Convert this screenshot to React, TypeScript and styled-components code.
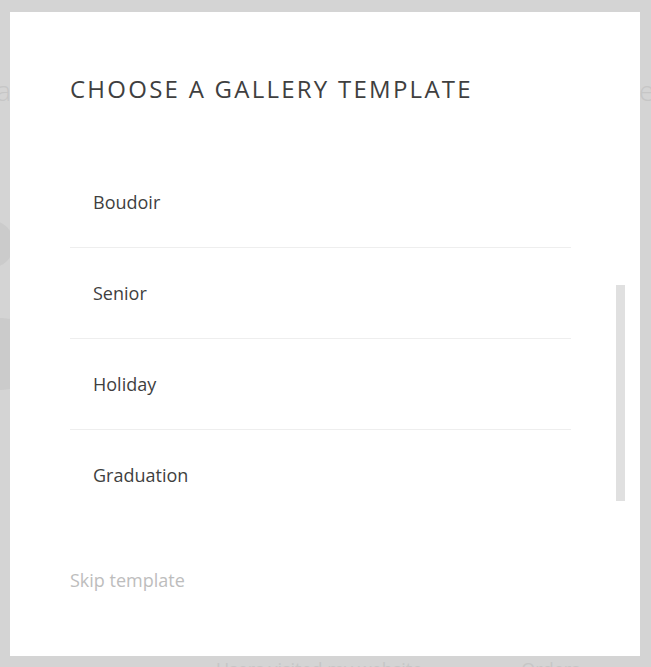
import * as React from 'react';
import { FC } from 'react';
import styled, { createGlobalStyle } from 'styled-components';

const GlobalStyle = createGlobalStyle`
    html, body {
        margin: 0;
        padding: 0;
        background: #d4d4d4;
        font-family: "Open Sans", "Noto Sans", sans-serif;
    }
    * {
        box-sizing: border-box;
    }
`;

// dimmed dashboard that sits behind the dialog
const BehindPage = styled.div`
    min-height: 100vh;
    display: flex;
    flex-direction: column;
    padding-top: 70px;
    color: #c6c6c6;
    overflow: hidden;
`;

const BehindHeader = styled.div`
    display: grid;
    grid-template-columns: 11px 1fr 12px;
    font-size: 28px;
    font-weight: 300;
    line-height: 40px;
`;

const ClipEnd = styled.div`
    display: flex;
    justify-content: flex-end;
    overflow: hidden;
    white-space: nowrap;
`;

const ClipStart = styled.div`
    display: flex;
    justify-content: flex-start;
    overflow: hidden;
    white-space: nowrap;
    grid-column: 3;
`;

const BehindAvatars = styled.div`
    display: flex;
    flex-direction: column;
    gap: 50px;
    margin-top: 110px;
    margin-left: -34px;
`;

const Avatar = styled.div<{ $size: number }>`
    width: ${p => p.$size}px;
    height: ${p => p.$size}px;
    border-radius: 50%;
    background: #cbcbcb;
`;

const BehindStats = styled.div`
    margin-top: auto;
    display: flex;
    gap: 99px;
    padding-left: 216px;
    font-size: 18px;
    line-height: 20px;
    margin-bottom: -12px;
`;

const Overlay = styled.div`
    position: fixed;
    inset: 0;
    padding: 12px 11px 11px 10px;
    display: flex;
`;

const Modal = styled.div`
    flex: 1;
    background: #ffffff;
    padding: 60px 15px 0 60px;
    display: flex;
    flex-direction: column;
`;

const Title = styled.h2`
    margin: 0 0 52px 0;
    font-size: 24px;
    line-height: 33px;
    font-weight: 400;
    letter-spacing: 2.25px;
    color: #3f3f3f;
    text-transform: uppercase;
`;

const ListArea = styled.div`
    display: flex;
    align-items: flex-start;
`;

const TemplateList = styled.ul`
    list-style: none;
    margin: 0;
    padding: 0;
    width: 501px;
`;

const TemplateRow = styled.li`
    padding: 33px 23px;
    font-size: 18px;
    line-height: 24px;
    color: #3f3f3f;
    border-bottom: 1px solid #eeeeee;
    cursor: pointer;

    &:last-child {
        border-bottom: none;
    }
`;

const ScrollTrack = styled.div`
    margin-left: auto;
    width: 9px;
    display: flex;
    flex-direction: column;
`;

const ScrollThumb = styled.div<{ $offset: number; $size: number }>`
    margin-top: ${p => p.$offset}px;
    height: ${p => p.$size}px;
    background: #e0e0e0;
`;

const SkipLink = styled.a`
    margin-top: 48px;
    font-size: 18px;
    line-height: 24px;
    color: #bdbdbd;
    text-decoration: none;
    cursor: pointer;
    align-self: flex-start;
`;

const templates = ['Boudoir', 'Senior', 'Holiday', 'Graduation'];

const TemplateDialog: FC = () => (
    <Overlay>
        <Modal>
            <Title>Choose a gallery template</Title>
            <ListArea>
                <TemplateList>
                    {templates.map(t => <TemplateRow key={t}>{t}</TemplateRow>)}
                </TemplateList>
                <ScrollTrack>
                    <ScrollThumb $offset={128} $size={216} />
                </ScrollTrack>
            </ListArea>
            <SkipLink>Skip template</SkipLink>
        </Modal>
    </Overlay>
);

export default function App() {
    return (<>
        <GlobalStyle />
        <BehindPage>
            <BehindHeader>
                <ClipEnd>Media</ClipEnd>
                <ClipStart>everything</ClipStart>
            </BehindHeader>
            <BehindAvatars>
                <Avatar $size={48} />
                <Avatar $size={72} />
            </BehindAvatars>
            <BehindStats>
                <span>Users visited my website</span>
                <span>Orders</span>
            </BehindStats>
        </BehindPage>
        <TemplateDialog />
    </>);
}
